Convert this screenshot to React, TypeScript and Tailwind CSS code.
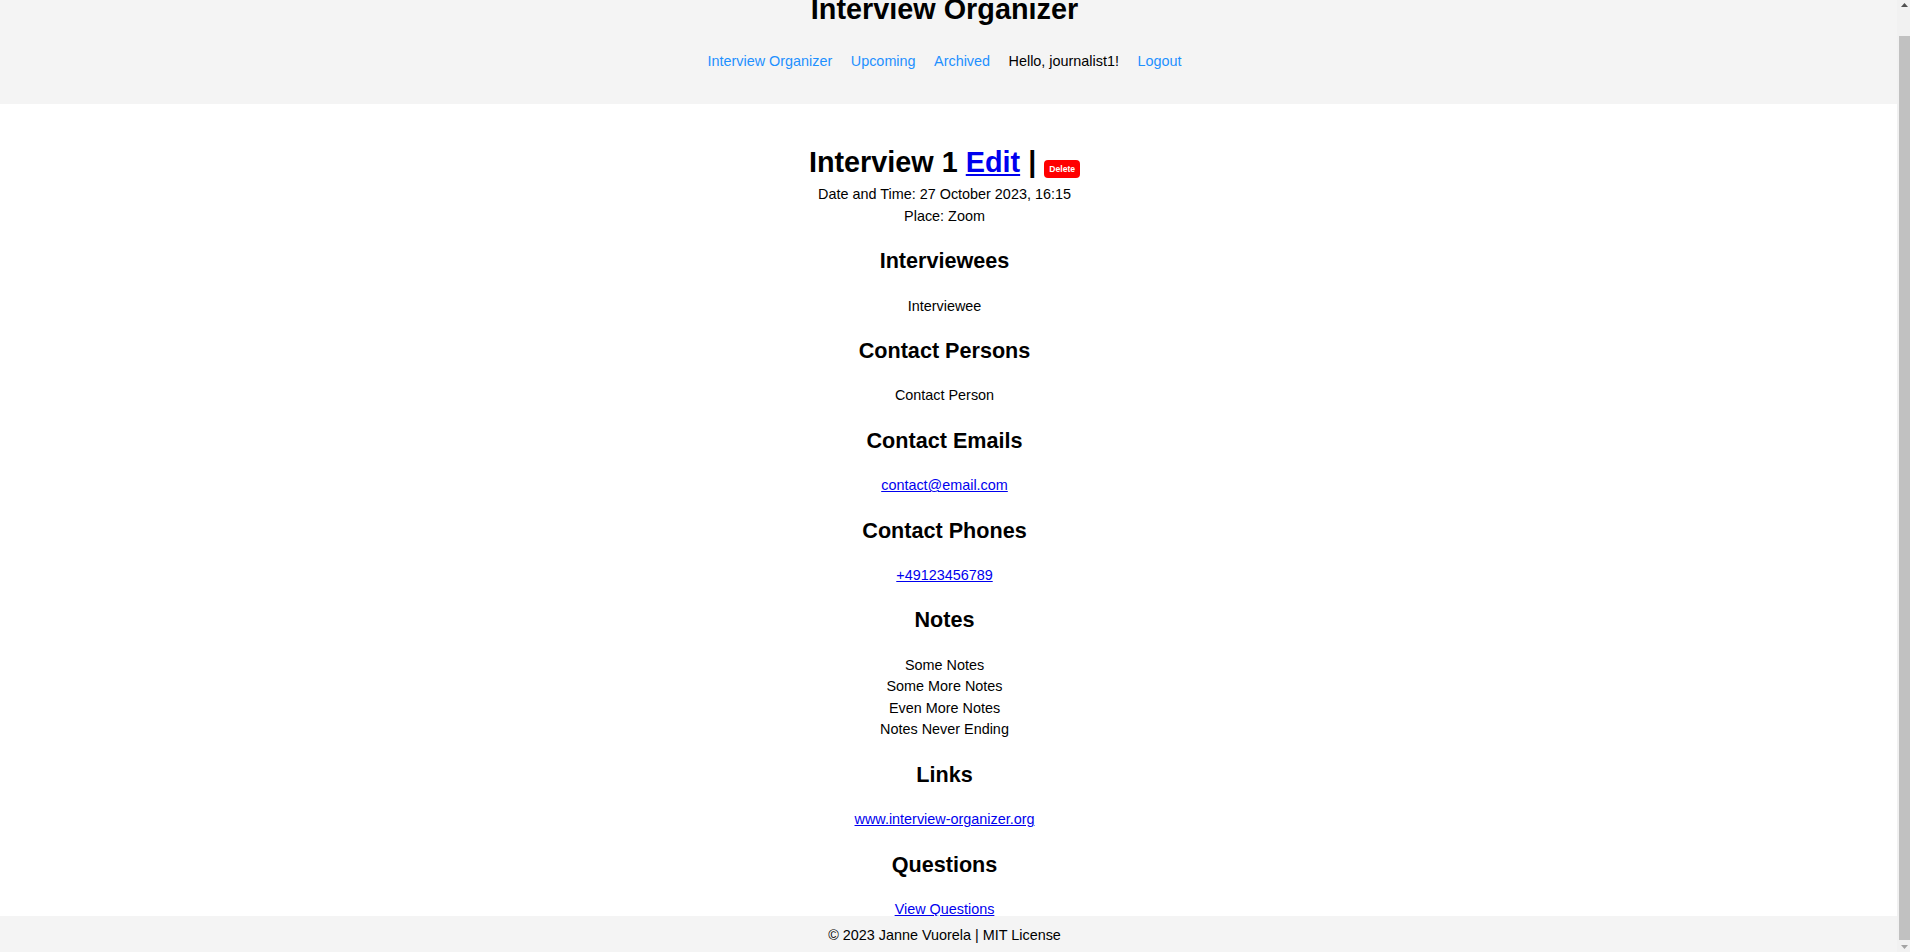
import { useLayoutEffect, useRef } from "react";

function Section({ title, children }: { title: string; children: React.ReactNode }) {
  return (
    <div>
      <h2 className="my-[17.9px] text-[21.6px] font-bold leading-[32.4px]">{title}</h2>
      <div className="leading-[21.6px]">{children}</div>
    </div>
  );
}

function Scrollbar() {
  return (
    <div className="flex h-full w-[13px] shrink-0 flex-col bg-[#f1f1f1]">
      <div className="flex h-[14px] items-start justify-center pt-[3px] pl-[2px]">
        <svg width="7" height="4" viewBox="0 0 7 4">
          <polygon points="3.5,0 7,4 0,4" fill="#505050" />
        </svg>
      </div>
      <div className="flex flex-1 flex-col pt-[22px] pl-[2px]">
        <div className="flex-1 bg-[#c1c1c1]" />
      </div>
      <div className="flex h-[12px] items-end justify-center pb-[3px] pl-[2px]">
        <svg width="7" height="4" viewBox="0 0 7 4">
          <polygon points="0,0 7,0 3.5,4" fill="#a3a3a3" />
        </svg>
      </div>
    </div>
  );
}

export default function App() {
  const ref = useRef<HTMLDivElement>(null);
  useLayoutEffect(() => {
    const el = ref.current;
    if (el) el.scrollTop = el.scrollHeight;
  }, []);

  return (
    <div className="flex h-screen w-full bg-white font-['Liberation_Sans',Arial,sans-serif] text-[14.4px] leading-[1.5] text-black">
      <div className="relative h-full min-w-0 flex-1">
        <div ref={ref} className="h-full overflow-hidden">
          <header className="bg-[#f4f4f4] pt-[8.4px] pb-[31.2px] pr-[8px] text-center">
            <h1 className="text-[28.8px] font-bold leading-[43.2px]">Interview Organizer</h1>
            <nav className="mt-[19.6px] flex justify-center gap-[18.5px] leading-[21.6px]">
              <a href="#" className="text-[#1e90ff]">Interview Organizer</a>
              <a href="#" className="text-[#1e90ff]">Upcoming</a>
              <a href="#" className="text-[#1e90ff]">Archived</a>
              <span className="text-black">Hello, journalist1!</span>
              <a href="#" className="text-[#1e90ff]">Logout</a>
            </nav>
          </header>
          <main className="pt-[37px] pb-[31.6px] pr-[8px] text-center">
            <h1 className="text-[28.8px] font-bold leading-[43.2px]">
              Interview 1{" "}
              <a href="#" className="text-[#0000ee] underline">Edit</a>{" "}
              |{" "}
              <button className="inline-block rounded-[4px] bg-[#ff0000] px-[5px] align-baseline text-[8.64px] font-bold leading-[18px] text-white">
                Delete
              </button>
            </h1>
            <div className="leading-[21.6px]">Date and Time: 27 October 2023, 16:15</div>
            <div className="leading-[21.6px]">Place: Zoom</div>

            <Section title="Interviewees">
              <div>Interviewee</div>
            </Section>
            <Section title="Contact Persons">
              <div>Contact Person</div>
            </Section>
            <Section title="Contact Emails">
              <a href="#" className="text-[#0000ee] underline">contact@email.com</a>
            </Section>
            <Section title="Contact Phones">
              <a href="#" className="text-[#0000ee] underline">+49123456789</a>
            </Section>
            <Section title="Notes">
              <div>Some Notes</div>
              <div>Some More Notes</div>
              <div>Even More Notes</div>
              <div>Notes Never Ending</div>
            </Section>
            <Section title="Links">
              <a href="#" className="text-[#0000ee] underline">www.interview-organizer.org</a>
            </Section>
            <Section title="Questions">
              <a href="#" className="text-[#0000ee] underline">View Questions</a>
            </Section>
          </main>
        </div>
        <footer className="absolute bottom-0 left-0 right-0 bg-[#f4f4f4] pt-[9px] pb-[5.4px] pr-[8px] text-center leading-[21.6px]">
          © 2023 Janne Vuorela | MIT License
        </footer>
      </div>
      <Scrollbar />
    </div>
  );
}
